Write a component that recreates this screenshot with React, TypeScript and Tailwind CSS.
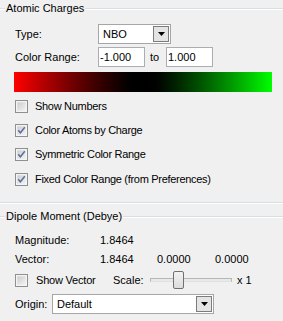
import { ReactNode } from 'react'

function GroupHeader({ title }: { title: string }) {
  return (
    <div className="flex items-center h-[17px]">
      <div className="w-[5px] h-[2px] border-t border-t-[#d5dfe5] border-b border-b-white" />
      <span className="px-[1px] leading-[17px]">{title}</span>
      <div className="flex-1 h-[2px] border-t border-t-[#d5dfe5] border-b border-b-white" />
    </div>
  )
}

function CheckBox({ checked }: { checked?: boolean }) {
  return (
    <svg width="13" height="13" viewBox="0 0 13 13" className="shrink-0">
      <defs>
        <linearGradient id="cbg" x1="0" y1="0" x2="1" y2="1">
          <stop offset="0" stopColor="#cbcbcb" />
          <stop offset="1" stopColor="#f4f4f4" />
        </linearGradient>
      </defs>
      <rect x="0.5" y="0.5" width="12" height="12" fill="#f4f4f4" stroke="#8e8f8f" />
      <rect x="2" y="2" width="9" height="9" fill="url(#cbg)" stroke="#f4f4f4" strokeWidth="0.6" />
      {checked && (
        <path d="M3.2 6.3 L5.4 8.8 L9.8 3.2" fill="none" stroke="#5a6f9f" strokeWidth="1.5" />
      )}
    </svg>
  )
}

function CheckRow({ label, checked, h }: { label: string; checked?: boolean; h: string }) {
  return (
    <div className={`flex items-center pl-[15px] ${h}`}>
      <CheckBox checked={checked} />
      <span className="ml-[7px] tracking-[-0.3px]">{label}</span>
    </div>
  )
}

function Combo({ value, w }: { value: string; w: string }) {
  return (
    <div className={`flex items-center h-[20px] bg-white border border-[#a6a6a6] ${w}`}>
      <span className="flex-1 pl-[4px] leading-[18px]">{value}</span>
      <div className="w-[16px] h-[16px] mr-[1px] flex items-center justify-center bg-[#e4e4e4] border border-[#7c7c7c]">
        <svg width="7" height="4" viewBox="0 0 7 4">
          <path d="M0 0 H7 L3.5 4 Z" fill="#000" />
        </svg>
      </div>
    </div>
  )
}

function TextBox({ children }: { children: ReactNode }) {
  return (
    <div className="w-[47px] h-[20px] bg-white border border-[#abadb3] pl-[1px] leading-[18px]">
      {children}
    </div>
  )
}

export default function App() {
  return (
    <div
      className="w-[283px] h-[321px] bg-[#f0f0f0] overflow-hidden text-[11px] text-black flex flex-col"
      style={{ fontFamily: '"Liberation Sans", Arial, sans-serif' }}
    >
      {/* Atomic Charges */}
      <GroupHeader title="Atomic Charges" />

      <div className="flex items-center h-[20px] mt-[7px]">
        <span className="w-[98px] pl-[15px]">Type:</span>
        <Combo value="NBO" w="w-[73px]" />
      </div>

      <div className="flex items-center h-[20px] mt-[3px]">
        <span className="w-[98px] pl-[15px]">Color Range:</span>
        <TextBox>-1.000</TextBox>
        <span className="w-[21px] pl-[5px]">to</span>
        <TextBox>1.000</TextBox>
      </div>

      <div className="ml-[14px] mt-[5px] w-[258px] h-[20px] bg-gradient-to-r from-[#ff0000] via-[#000000] to-[#00ff00]" />

      <div className="mt-[2px]">
        <CheckRow label="Show Numbers" h="h-[24px]" />
        <CheckRow label="Color Atoms by Charge" checked h="h-[24px]" />
        <CheckRow label="Symmetric Color Range" checked h="h-[25px]" />
        <CheckRow label="Fixed Color Range (from Preferences)" checked h="h-[24px]" />
      </div>

      <div className="mt-[11px] h-[2px] border-t border-t-[#d5dfe5] border-b border-b-white" />

      {/* Dipole Moment */}
      <div className="mt-[4px]">
        <GroupHeader title="Dipole Moment (Debye)" />
      </div>

      <div className="flex items-center h-[18px] mt-[6px] pl-[15px]">
        <span className="w-[85px]">Magnitude:</span>
        <span>1.8464</span>
      </div>

      <div className="flex items-center h-[18px] mt-[1px] pl-[15px]">
        <span className="w-[85px]">Vector:</span>
        <span className="w-[57px]">1.8464</span>
        <span className="w-[58px]">0.0000</span>
        <span>0.0000</span>
      </div>

      <div className="flex items-center h-[18px] mt-[3px] pl-[15px]">
        <CheckBox />
        <span className="ml-[8px] w-[77px] tracking-[-0.2px]">Show Vector</span>
        <span className="w-[37px]">Scale:</span>
        <div className="relative w-[82px] h-[18px] flex items-center">
          <div className="w-full h-[4px] bg-[#e7eaea] border border-[#b6b6b6] border-b-[#e0e0e0]" />
          <div className="absolute left-[23px] top-0 w-[11px] h-[18px] rounded-[2px] border border-[#707070] bg-gradient-to-b from-[#f2f2f2] to-[#dcdcdc]" />
        </div>
        <span className="ml-[5px]">x 1</span>
      </div>

      <div className="flex items-center h-[20px] mt-[5px] pl-[15px]">
        <span className="w-[37px]">Origin:</span>
        <Combo value="Default" w="w-[162px]" />
      </div>
    </div>
  )
}
